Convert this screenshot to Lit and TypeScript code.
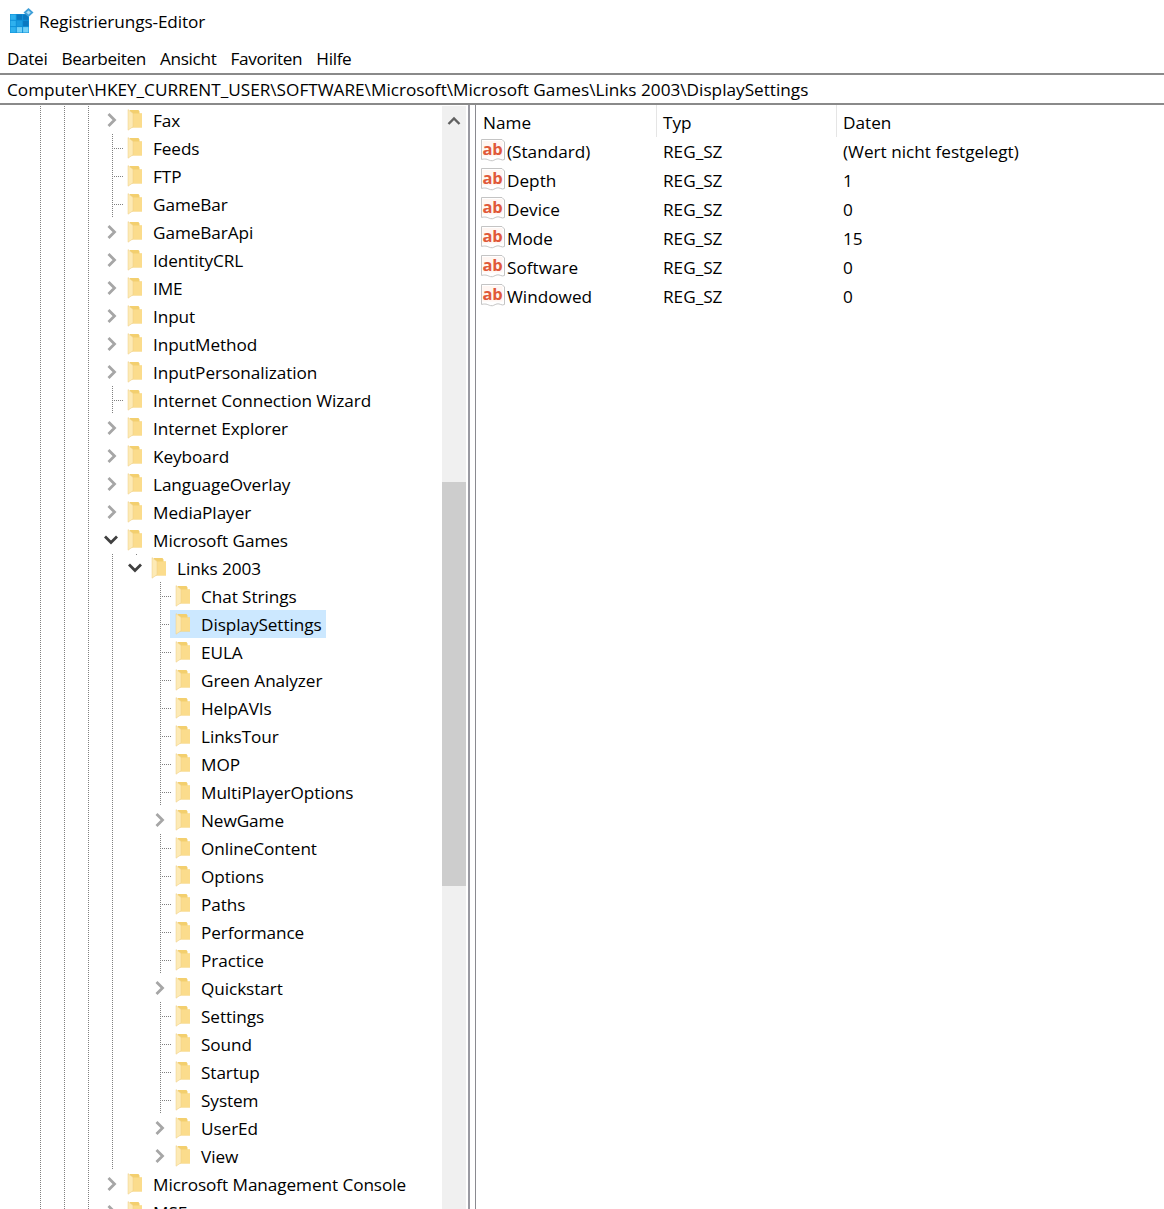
import { LitElement, html, css, svg } from "lit";
import { customElement } from "lit/decorators.js";

type Kind = "none" | "closed" | "open";
interface Node { name: string; kind: Kind; guides: number[]; last?: boolean; sel?: boolean; stub?: boolean; }

const top = (name: string, kind: Kind = "closed"): Node => ({ name, kind, guides: [1, 1, 1] });
const inner = (name: string, kind: Kind = "none", extra: Partial<Node> = {}): Node => ({ name, kind, guides: [1, 1, 1, 1, 0], ...extra });

const nodes: Node[] = [
  top("Fax"), top("Feeds", "none"), top("FTP", "none"), top("GameBar", "none"), top("GameBarApi"),
  top("IdentityCRL"), top("IME"), top("Input"), top("InputMethod"), top("InputPersonalization"),
  top("Internet Connection Wizard", "none"), top("Internet Explorer"), top("Keyboard"), top("LanguageOverlay"),
  top("MediaPlayer"), top("Microsoft Games", "open"),
  { name: "Links 2003", kind: "open", guides: [1, 1, 1, 1], stub: true },
  inner("Chat Strings"), inner("DisplaySettings", "none", { sel: true }), inner("EULA"), inner("Green Analyzer"),
  inner("HelpAVIs"), inner("LinksTour"), inner("MOP"), inner("MultiPlayerOptions"), inner("NewGame", "closed"),
  inner("OnlineContent"), inner("Options"), inner("Paths"), inner("Performance"), inner("Practice"),
  inner("Quickstart", "closed"), inner("Settings"), inner("Sound"), inner("Startup"), inner("System"),
  inner("UserEd", "closed"), inner("View", "closed", { last: true }),
  top("Microsoft Management Console"), top("MSF"),
];

const values = [
  ["(Standard)", "(Wert nicht festgelegt)"], ["Depth", "1"], ["Device", "0"],
  ["Mode", "15"], ["Software", "0"], ["Windowed", "0"],
];

const folder = svg`<svg class="folder" width="16" height="22" viewBox="0 0 16 22">
  <path d="M3 1h8.500l1 1.500v2H15v14H3z" fill="#f3cf6e"/>
  <path d="M5 4.500h10v13.700H5z" fill="#fbdc8c"/>
  <path d="M1 .6l5 3.600v13.600l-5 3.400z" fill="#fdeab5"/>
  <path d="M1 .6l5 3.600v13.600l-5 3.400z" fill="none" stroke="#eccd84" stroke-width=".5"/>
</svg>`;

const ab = svg`<svg class="ab" width="26" height="26" viewBox="0 0 26 26">
  <path d="M1.500 2.500h20.500l2.500 2.500v17.500c-3 1.500-4.500-1.300-7.500-.6s-3.500 2.400-6.500 1.700-3.500-2.300-9-1.200z" fill="#fff" stroke="#c4c4c4" stroke-width="1"/>
  <rect x="2.500" y="4" width="20" height="15.500" fill="#fff6f2"/>
  <text x="12.500" y="18" text-anchor="middle" font-family="Open Sans, sans-serif" font-weight="700" font-size="16.500" letter-spacing="-.3" fill="#e0593a">ab</text>
</svg>`;

const chevR = svg`<svg class="chev" width="12" height="16" viewBox="0 0 12 16"><path d="M2.500 2l6 6-6 6" fill="none" stroke="#a6a6a6" stroke-width="2.800"/></svg>`;
const chevD = svg`<svg class="chev" width="16" height="12" viewBox="0 0 16 12"><path d="M2 2.500l6 6 6-6" fill="none" stroke="#404040" stroke-width="2.800"/></svg>`;
const chevU = svg`<svg width="14" height="10" viewBox="0 0 14 10"><path d="M1.500 8l5.500-5.500L12.500 8" fill="none" stroke="#606060" stroke-width="2.400"/></svg>`;

const appIcon = svg`<svg width="26" height="26" viewBox="0 0 26 26">
  <rect x="1" y="6" width="19" height="19" fill="#0f90d8"/>
  <g fill="#2fb1ee">
    <rect x="1.500" y="6.500" width="5.300" height="5.300"/><rect x="7.800" y="6.500" width="5.300" height="5.300" fill="#0a78c0"/><rect x="14.100" y="6.500" width="5.400" height="5.300" fill="#0a78c0"/>
    <rect x="1.500" y="12.800" width="5.300" height="5.300"/><rect x="7.800" y="12.800" width="5.300" height="5.300" fill="#1a9be0"/><rect x="14.100" y="12.800" width="5.400" height="5.300" fill="#0a78c0"/>
    <rect x="1.500" y="19.100" width="5.300" height="5.400"/><rect x="7.800" y="19.100" width="5.300" height="5.400" fill="#6fd0f8"/><rect x="14.100" y="19.100" width="5.400" height="5.400" fill="#6fd0f8"/>
  </g>
  <path d="M19.500 0l5 4.500-5 4.500-5-4.500z" fill="#3f9fd8"/><path d="M19.500 2.500l2.300 2-2.300 2-2.300-2z" fill="#a8dcf5"/>
</svg>`;

@customElement("app-root")
export class AppRoot extends LitElement {
  static styles = css`
    :host { display: block; width: 1164px; height: 1209px; overflow: hidden; background: #fff; color: #000;
      font-family: "Open Sans", "Noto Sans", sans-serif; font-size: 17.2px; }
    .title { height: 44px; display: flex; align-items: center; padding-left: 9px; gap: 4px; box-sizing: border-box; padding-bottom: 2px; letter-spacing: -0.1px; }
    .menu { height: 29px; display: flex; align-items: center; padding-left: 7px; gap: 14px; padding-bottom: 1px; box-sizing: border-box; letter-spacing: -0.35px; }
    .addr { height: 32px; box-sizing: border-box; border-top: 2px solid #8a8a8a; border-bottom: 2px solid #8a8a8a; padding-left: 7px;
      display: flex; align-items: center; white-space: nowrap; }
    .panes { display: flex; height: 1104px; }
    .tree { width: 442px; flex: none; overflow: hidden; padding-top: 1px; box-sizing: border-box; letter-spacing: -0.08px; }
    .row { height: 28px; display: flex; }
    .cell { width: 24px; height: 28px; flex: none; position: relative; }
    .pad { width: 24px; flex: none; }
    .v::before { content: ""; position: absolute; left: 16px; top: 0; bottom: 0; width: 1px;
      background: repeating-linear-gradient(#808080 0 1px, transparent 1px 2px); }
    .h::after { content: ""; position: absolute; left: 16px; top: 14px; width: 12px; height: 1px;
      background: repeating-linear-gradient(90deg, #808080 0 1px, transparent 1px 2px); }
    .stub::before { content: ""; position: absolute; left: 16px; top: 0; width: 1px; height: 1px; background: #808080; }
    .btn { position: absolute; left: 0; top: 0; width: 32px; height: 28px; display: flex; align-items: center; padding-left: 10px; box-sizing: border-box; }
    .btn.down { padding-left: 7px; }
    .label { display: flex; align-items: center; height: 28px; padding: 0 4px 0 31px; margin-left: 2px; white-space: nowrap; position: relative; }
    .label .folder { position: absolute; left: 5px; top: 3px; }
    .label.sel { background: #cce8ff; }
    .scroll { width: 24px; flex: none; background: #f0f0f0; margin-top: 1px; display: flex; flex-direction: column; align-items: center; }
    .up { height: 30px; display: flex; align-items: center; justify-content: center; flex: none; }
    .spacer { height: 346px; flex: none; }
    .thumb { width: 100%; height: 404px; background: #cdcdcd; flex: none; }
    .split { flex: none; box-sizing: border-box; margin-left: 2px; width: 8px; border-left: 2px solid #9a9aa2; border-right: 1.500px solid #8a8a90; }
    .list { flex: 1; min-width: 0; }
    .head { display: grid; grid-template-columns: 181px 180px 1fr; height: 32px; }
    .head div { padding: 5px 0 0 6px; box-sizing: border-box; height: 32px; line-height: 26px; border-right: 1px solid #e5e5e5; }
    .head div:first-child { padding-left: 7px; }
    .head div:last-child { border-right: none; }
    .lrow { display: grid; grid-template-columns: 181px 180px 1fr; height: 29px; align-items: center; }
    .lrow .n { display: flex; align-items: center; padding-left: 4px; }
    .lrow .ab { margin-right: 1px; margin-top: -3px; }
    .lrow .t { padding-left: 6px; }
    .lrow .d { padding-left: 6px; }
  `;

  private renderNode(n: Node) {
    const gCells = n.guides.map((g) => html`<div class="cell ${g ? "v" : ""}"></div>`);
    const cellCls = n.kind !== "none" ? (n.stub ? "stub" : "") : "v h";
    const btn = n.kind === "closed"
      ? html`<div class="btn">${chevR}</div>`
      : n.kind === "open" ? html`<div class="btn down">${chevD}</div>` : "";
    return html`<div class="row">
      <div class="pad"></div>
      ${gCells}
      <div class="cell ${cellCls}">${btn}</div>
      <div class="label ${n.sel ? "sel" : ""}">${folder}<span>${n.name}</span></div>
    </div>`;
  }

  render() {
    return html`
      <div class="title">${appIcon}<span>Registrierungs-Editor</span></div>
      <div class="menu">${["Datei", "Bearbeiten", "Ansicht", "Favoriten", "Hilfe"].map((m) => html`<span>${m}</span>`)}</div>
      <div class="addr">Computer\\HKEY_CURRENT_USER\\SOFTWARE\\Microsoft\\Microsoft Games\\Links 2003\\DisplaySettings</div>
      <div class="panes">
        <div class="tree">${nodes.map((n) => this.renderNode(n))}</div>
        <div class="scroll">
          <div class="up">${chevU}</div><div class="spacer"></div><div class="thumb"></div>
        </div>
        <div class="split"></div>
        <div class="list">
          <div class="head"><div>Name</div><div>Typ</div><div>Daten</div></div>
          ${values.map(([n, d]) => html`<div class="lrow"><div class="n">${ab}<span>${n}</span></div><div class="t">REG_SZ</div><div class="d">${d}</div></div>`)}
        </div>
      </div>
    `;
  }
}
